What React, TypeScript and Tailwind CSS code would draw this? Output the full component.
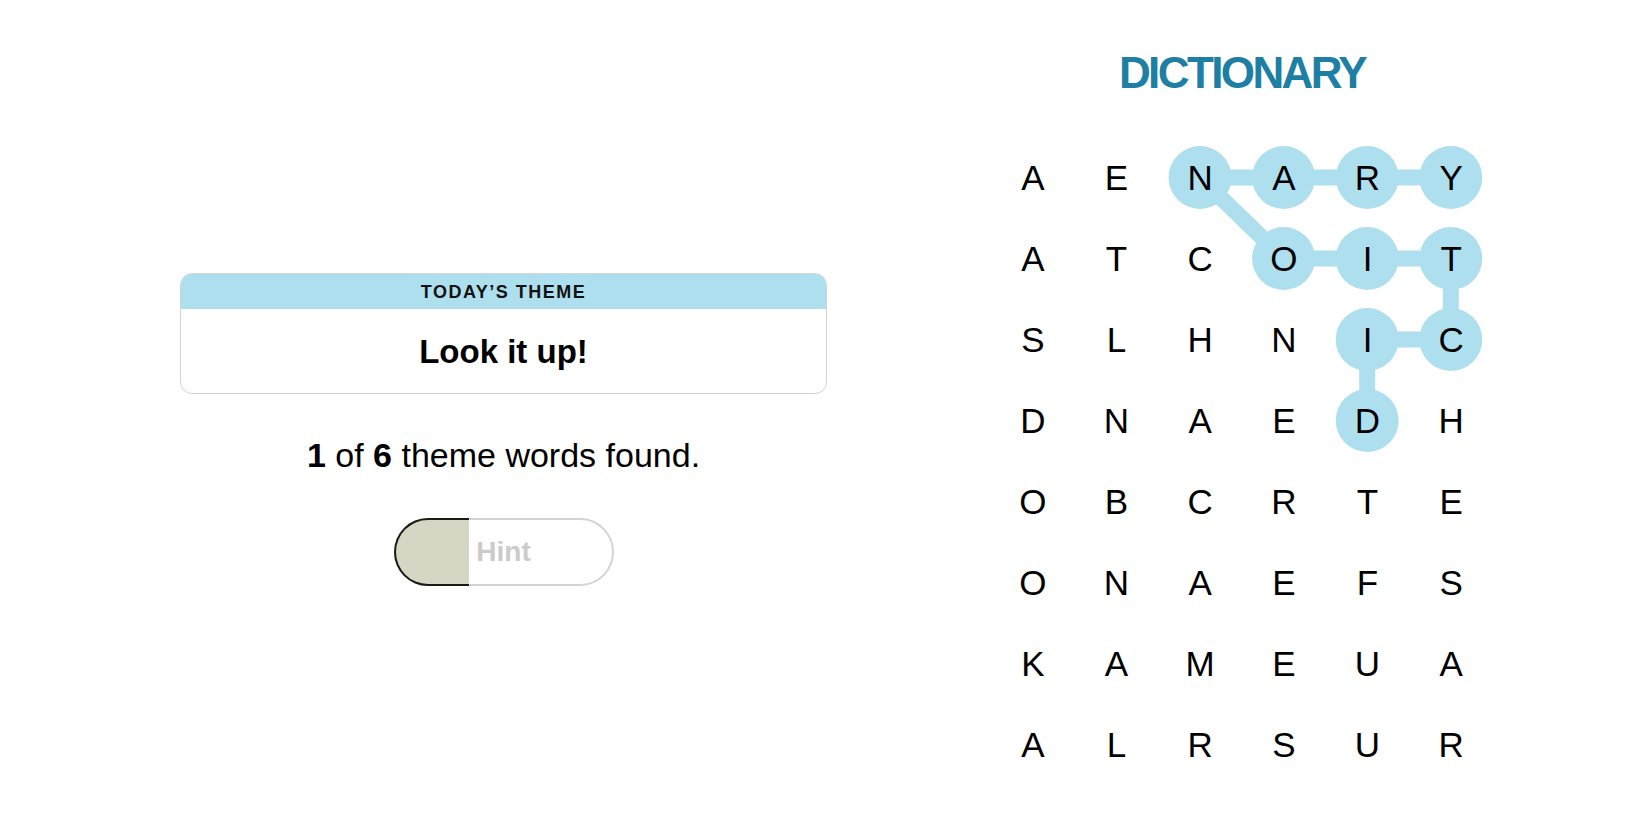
import React from "react";

const rows = [
  "AENARY",
  "ATCOIT",
  "SLHNIC",
  "DNAEDH",
  "OBCRTE",
  "ONAEFS",
  "KAMEUA",
  "ALRSUR",
];

// path of the found word, as [row, col]
const found: [number, number][] = [
  [3, 4],
  [2, 4],
  [2, 5],
  [1, 5],
  [1, 4],
  [1, 3],
  [0, 2],
  [0, 3],
  [0, 4],
  [0, 5],
];

const CW = 83.6;
const CH = 81;

function cx(c: number) {
  return CW / 2 + c * CW;
}
function cy(r: number) {
  return CH / 2 + r * CH;
}

function Board() {
  const points = found.map(([r, c]) => `${cx(c)},${cy(r)}`).join(" ");
  return (
    <div className="relative w-[502px] h-[648px]">
      <svg className="absolute inset-0" width="502" height="648" viewBox="0 0 502 648">
        <polyline points={points} fill="none" stroke="#aedfee" strokeWidth="16" strokeLinejoin="round" />
        {found.map(([r, c]) => (
          <circle key={`${r}-${c}`} cx={cx(c)} cy={cy(r)} r="31.5" fill="#aedfee" />
        ))}
      </svg>
      <div className="relative grid grid-cols-6">
        {rows.map((row, r) =>
          row.split("").map((ch, c) => (
            <div key={`${r}-${c}`} className="h-[81px] flex items-center justify-center text-[35px] leading-none text-black">
              {ch}
            </div>
          ))
        )}
      </div>
    </div>
  );
}

export default function App() {
  return (
    <main className="min-h-screen bg-white font-['Liberation_Sans',Arial,sans-serif] text-black">
      <div className="flex pl-[180px]">
        {/* LEFT: theme + progress + hint */}
        <section className="w-[647px] pt-[273px] flex flex-col items-center">
          <div className="w-full rounded-[12px] border border-[#d3d3d3] overflow-hidden">
            <div className="h-[35px] bg-[#aedfee] flex items-center justify-center">
              <span className="text-[18px] font-semibold tracking-[1.5px] text-[#121212] leading-none">
                TODAY’S THEME
              </span>
            </div>
            <div className="h-[84px] flex items-center justify-center">
              <h2 className="text-[33px] font-bold leading-none">Look it up!</h2>
            </div>
          </div>

          <p className="mt-[41px] text-[34px] leading-[40px]">
            <b>1</b> of <b>6</b> theme words found.
          </p>

          <button className="relative mt-[43px] w-[220px] h-[68px] rounded-full border-2 border-[#d4d4d4] bg-white flex items-center justify-center">
            <div className="absolute -left-[2px] -top-[2px] -bottom-[2px] w-[75px] bg-[#d6d6c4] border-2 border-r-0 border-[#1a1a1a] rounded-l-full" />
            <span className="relative text-[28px] font-bold text-[#cbcbcb] leading-none">Hint</span>
          </button>
        </section>

        {/* RIGHT: board */}
        <section className="ml-[164px] w-[502px] pt-[51px] flex flex-col items-center">
          <h1 className="h-[44px] text-[44px] leading-[44px] font-bold tracking-[-2.6px] text-[#1d7fa3]">
            DICTIONARY
          </h1>
          <div className="mt-[42px]">
            <Board />
          </div>
        </section>
      </div>
    </main>
  );
}
